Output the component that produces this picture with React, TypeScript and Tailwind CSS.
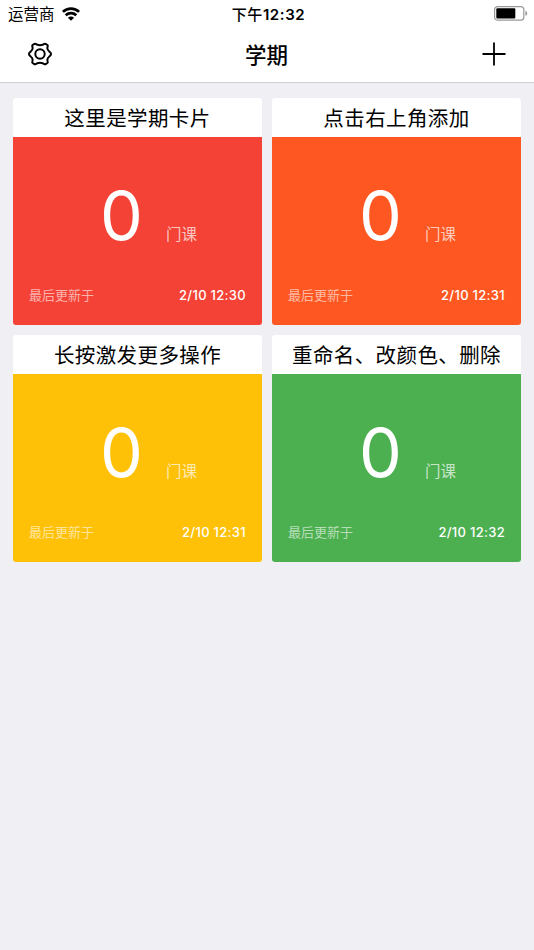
const semesters = [
  { title: "这里是学期卡片", count: 0, updated: "2/10 12:30", color: "bg-[#f44336]" },
  { title: "点击右上角添加", count: 0, updated: "2/10 12:31", color: "bg-[#ff5722]" },
  { title: "长按激发更多操作", count: 0, updated: "2/10 12:31", color: "bg-[#ffc107]" },
  { title: "重命名、改颜色、删除", count: 0, updated: "2/10 12:32", color: "bg-[#4caf50]" },
];

const WifiIcon = () => (
  <svg width="18" height="14" viewBox="0 0 18 14" fill="none" stroke="#000" strokeWidth="2.7">
    <path d="M0.9 4.9C5.4 0.5 12.6 0.5 17.1 4.9" />
    <path d="M3.7 8.2C6.7 5.4 11.3 5.4 14.3 8.2" />
    <path d="M9 13.7L5.9 10.8C7.6 9.2 10.4 9.2 12.1 10.8Z" fill="#000" stroke="none" />
  </svg>
);

const BatteryIcon = () => (
  <svg width="34" height="15" viewBox="0 0 34 15" fill="none">
    <rect x="0.6" y="0.6" width="29.2" height="13.6" rx="3" stroke="#999" strokeWidth="1.2" />
    <rect x="2.3" y="2.3" width="19" height="10.2" rx="1" fill="#000" />
    <path d="M31.4 5C33.8 5.4 33.8 9.4 31.4 9.8Z" fill="#999" />
  </svg>
);

const GearIcon = () => (
  <svg width="24" height="24" viewBox="-12 -12 24 24" fill="none" stroke="#000" strokeWidth="2" strokeLinejoin="round">
    <path d="M-2.6 -9.2Q0 -8.4 2.6 -9.2L4.3 -10.1Q5.2 -10.5 6 -9.9L7.4 -9Q8 -8.5 7.7 -7.5L7.3 -6Q7.4 -4 9.3 -2.5L10.3 -1.6Q11 -1 11 0Q11 1 10.3 1.6L9.3 2.5Q7.4 4 7.3 6L7.7 7.5Q8 8.5 7.4 9L6 9.9Q5.2 10.5 4.3 10.1L2.6 9.2Q0 8.4 -2.6 9.2L-4.3 10.1Q-5.2 10.5 -6 9.9L-7.4 9Q-8 8.5 -7.7 7.5L-7.3 6Q-7.4 4 -9.3 2.5L-10.3 1.6Q-11 1 -11 0Q-11 -1 -10.3 -1.6L-9.3 -2.5Q-7.4 -4 -7.3 -6L-7.7 -7.5Q-8 -8.5 -7.4 -9L-6 -9.9Q-5.2 -10.5 -4.3 -10.1Z" />
    <circle r="4.7" />
  </svg>
);

const SemesterCard = ({ title, count, updated, color }: (typeof semesters)[number]) => (
  <div className="flex h-[227px] flex-col overflow-hidden rounded-[3px]">
    <div className="flex h-[39px] items-center justify-center bg-white pt-[3px] text-[20.5px] tracking-[0.4px] whitespace-nowrap text-black">
      {title}
    </div>
    <div className={`flex flex-1 flex-col text-white ${color}`}>
      <div className="flex h-[138px] items-baseline pt-[36px] pl-[87px]">
        <span className="w-[66px] text-[68px] leading-[84px]">{count}</span>
        <span className="text-[15.5px] leading-5 text-white/70">门课</span>
      </div>
      <div className="flex items-center justify-between px-4 pt-[10px] text-[13px] leading-5">
        <span className="text-white/60">最后更新于</span>
        <span className="font-medium tracking-[0.3px]">{updated}</span>
      </div>
    </div>
  </div>
);

const App = () => {
  return (
    <div className="min-h-screen bg-[#efeff4] font-['Inter','Noto_Sans_CJK_SC',sans-serif]">
      <header className="h-[83px] border-b border-[#d0d0d4] bg-white text-black">
        {/* Status bar */}
        <div className="grid h-[27px] grid-cols-3 items-center pr-[6px] pl-2">
          <div className="flex items-center gap-[7px] text-[15.5px]">
            <span className="pt-0.5">运营商</span>
            <WifiIcon />
          </div>
          <span className="pt-[3px] pl-px text-center text-[15px] font-semibold tracking-[0.6px]">
            <span className="font-medium">下午</span>12:32
          </span>
          <div className="flex justify-end">
            <BatteryIcon />
          </div>
        </div>

        {/* Navigation bar */}
        <div className="flex h-[54px] items-center justify-between px-7">
          <button aria-label="设置">
            <GearIcon />
          </button>
          <h1 className="pt-[3px] pr-px text-[21.5px] font-medium">学期</h1>
          <button aria-label="添加">
            <svg width="24" height="24" viewBox="0 0 24 24" stroke="#000" strokeWidth="1.8">
              <path d="M12 0.5V23.5M0.5 12H23.5" />
            </svg>
          </button>
        </div>
      </header>

      <main className="grid grid-cols-2 gap-[10px] px-[13px] pt-[15px]">
        {semesters.map((semester) => (
          <SemesterCard key={semester.title} {...semester} />
        ))}
      </main>
    </div>
  );
};

export default App;
